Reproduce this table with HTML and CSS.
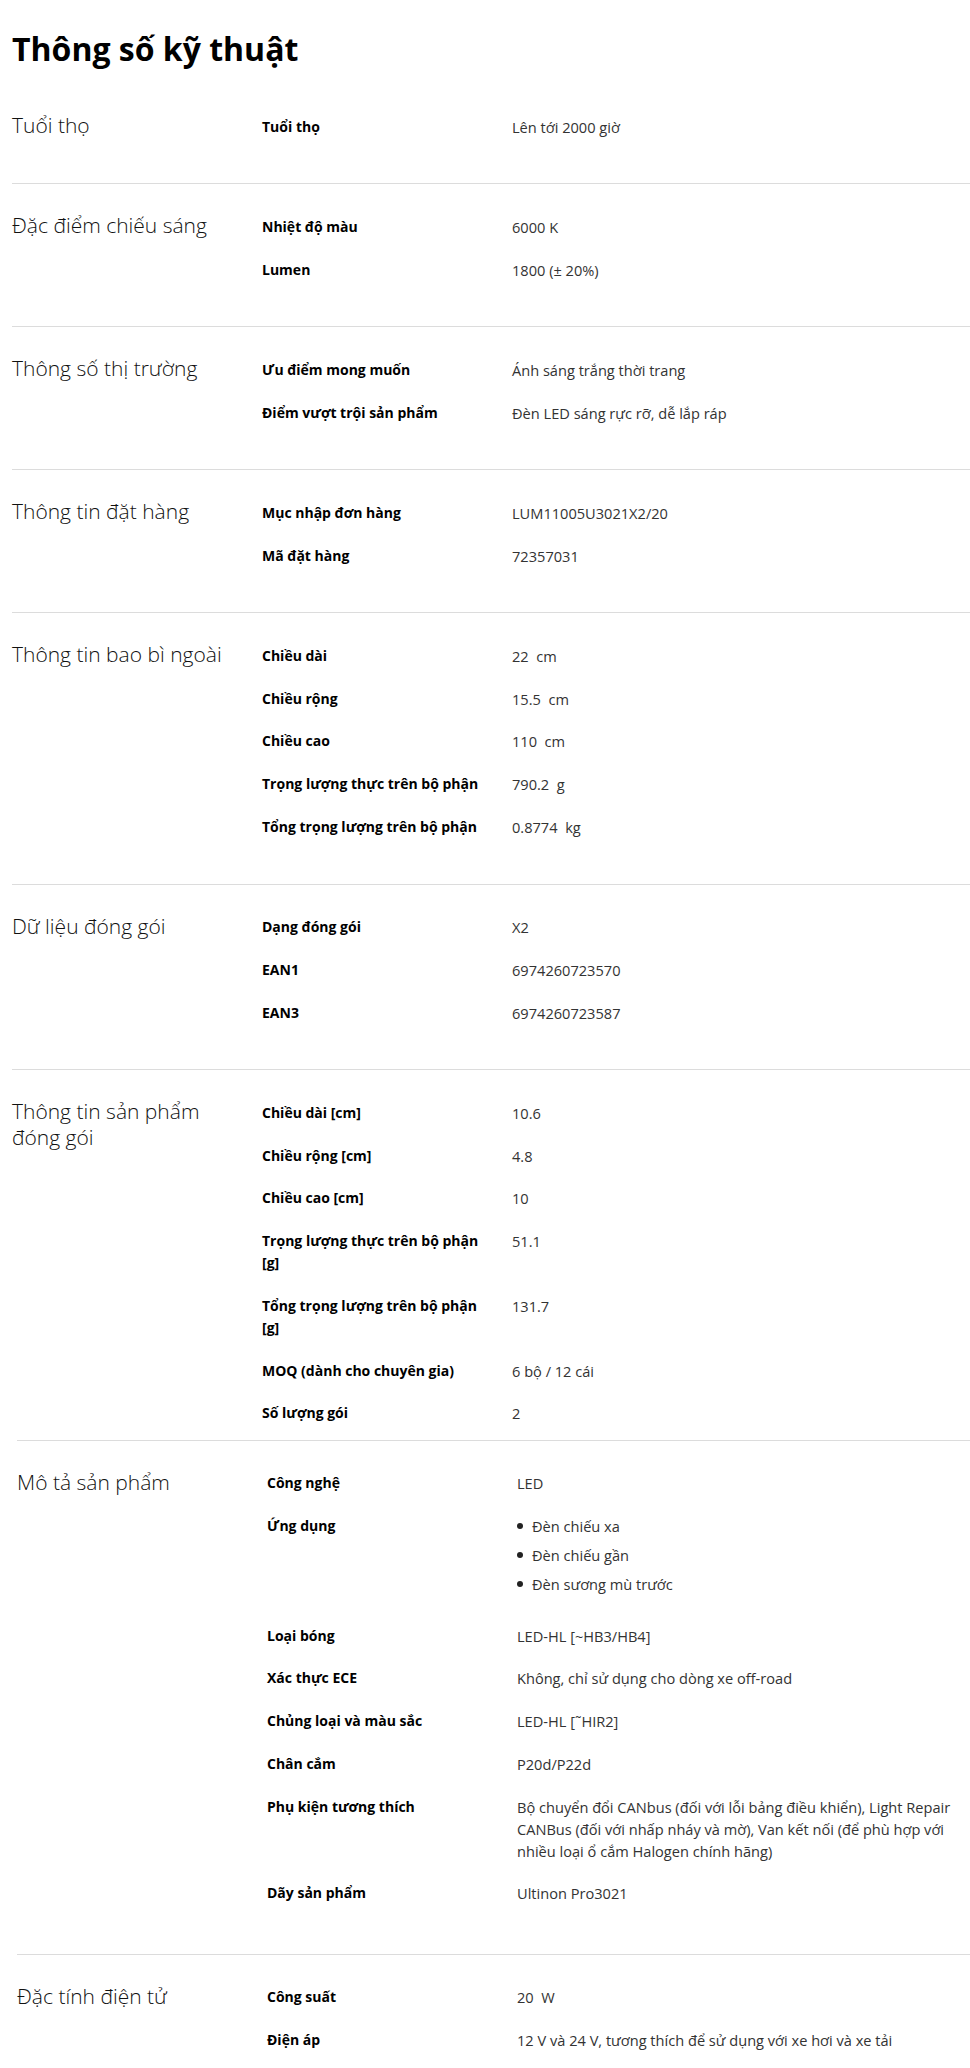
FILE: index.html
```html
<!DOCTYPE html>
<html lang="vi">
<head>
<meta charset="utf-8">
<title>Thông số kỹ thuật</title>
<link rel="stylesheet" href="styles.css">
</head>
<body>
<main class="page">
  <h1 class="title">Thông số kỹ thuật</h1>

  <div class="specs specs-a">
    <section class="spec-section">
      <h3 class="spec-heading">Tuổi thọ</h3>
      <dl class="spec-list">
        <div class="spec-row"><dt>Tuổi thọ</dt><dd>Lên tới 2000 giờ</dd></div>
      </dl>
    </section>

    <section class="spec-section">
      <h3 class="spec-heading">Đặc điểm chiếu sáng</h3>
      <dl class="spec-list">
        <div class="spec-row"><dt>Nhiệt độ màu</dt><dd>6000 K</dd></div>
        <div class="spec-row"><dt>Lumen</dt><dd>1800 (± 20%)</dd></div>
      </dl>
    </section>

    <section class="spec-section">
      <h3 class="spec-heading">Thông số thị trường</h3>
      <dl class="spec-list">
        <div class="spec-row"><dt>Ưu điểm mong muốn</dt><dd>Ánh sáng trắng thời trang</dd></div>
        <div class="spec-row"><dt>Điểm vượt trội sản phẩm</dt><dd>Đèn LED sáng rực rỡ, dễ lắp ráp</dd></div>
      </dl>
    </section>

    <section class="spec-section">
      <h3 class="spec-heading">Thông tin đặt hàng</h3>
      <dl class="spec-list">
        <div class="spec-row"><dt>Mục nhập đơn hàng</dt><dd>LUM11005U3021X2/20</dd></div>
        <div class="spec-row"><dt>Mã đặt hàng</dt><dd>72357031</dd></div>
      </dl>
    </section>

    <section class="spec-section">
      <h3 class="spec-heading">Thông tin bao bì ngoài</h3>
      <dl class="spec-list">
        <div class="spec-row"><dt>Chiều dài</dt><dd>22&nbsp; cm</dd></div>
        <div class="spec-row"><dt>Chiều rộng</dt><dd>15.5&nbsp; cm</dd></div>
        <div class="spec-row"><dt>Chiều cao</dt><dd>110&nbsp; cm</dd></div>
        <div class="spec-row"><dt>Trọng lượng thực trên bộ phận</dt><dd>790.2&nbsp; g</dd></div>
        <div class="spec-row"><dt>Tổng trọng lượng trên bộ phận</dt><dd>0.8774&nbsp; kg</dd></div>
      </dl>
    </section>

    <section class="spec-section">
      <h3 class="spec-heading">Dữ liệu đóng gói</h3>
      <dl class="spec-list">
        <div class="spec-row"><dt>Dạng đóng gói</dt><dd>X2</dd></div>
        <div class="spec-row"><dt>EAN1</dt><dd>6974260723570</dd></div>
        <div class="spec-row"><dt>EAN3</dt><dd>6974260723587</dd></div>
      </dl>
    </section>

    <section class="spec-section spec-section-last">
      <h3 class="spec-heading">Thông tin sản phẩm đóng gói</h3>
      <dl class="spec-list">
        <div class="spec-row"><dt>Chiều dài [cm]</dt><dd>10.6</dd></div>
        <div class="spec-row"><dt>Chiều rộng [cm]</dt><dd>4.8</dd></div>
        <div class="spec-row"><dt>Chiều cao [cm]</dt><dd>10</dd></div>
        <div class="spec-row"><dt>Trọng lượng thực trên bộ phận [g]</dt><dd>51.1</dd></div>
        <div class="spec-row"><dt>Tổng trọng lượng trên bộ phận [g]</dt><dd>131.7</dd></div>
        <div class="spec-row"><dt>MOQ (dành cho chuyên gia)</dt><dd>6 bộ / 12 cái</dd></div>
        <div class="spec-row"><dt>Số lượng gói</dt><dd>2</dd></div>
      </dl>
    </section>
  </div>

  <div class="specs specs-b">
    <section class="spec-section">
      <h3 class="spec-heading">Mô tả sản phẩm</h3>
      <dl class="spec-list">
        <div class="spec-row"><dt>Công nghệ</dt><dd>LED</dd></div>
        <div class="spec-row"><dt>Ứng dụng</dt>
          <dd>
            <ul class="bullets">
              <li>Đèn chiếu xa</li>
              <li>Đèn chiếu gần</li>
              <li>Đèn sương mù trước</li>
            </ul>
          </dd>
        </div>
        <div class="spec-row"><dt>Loại bóng</dt><dd>LED-HL [~HB3/HB4]</dd></div>
        <div class="spec-row"><dt>Xác thực ECE</dt><dd>Không, chỉ sử dụng cho dòng xe off-road</dd></div>
        <div class="spec-row"><dt>Chủng loại và màu sắc</dt><dd>LED-HL [˜HIR2]</dd></div>
        <div class="spec-row"><dt>Chân cắm</dt><dd>P20d/P22d</dd></div>
        <div class="spec-row"><dt>Phụ kiện tương thích</dt><dd>Bộ chuyển đổi CANbus (đối với lỗi bảng điều khiển), Light Repair CANBus (đối với nhấp nháy và mờ), Van kết nối (để phù hợp với nhiều loại ổ cắm Halogen chính hãng)</dd></div>
        <div class="spec-row"><dt>Dãy sản phẩm</dt><dd>Ultinon Pro3021</dd></div>
      </dl>
    </section>

    <section class="spec-section">
      <h3 class="spec-heading">Đặc tính điện tử</h3>
      <dl class="spec-list">
        <div class="spec-row"><dt>Công suất</dt><dd>20&nbsp; W</dd></div>
        <div class="spec-row"><dt>Điện áp</dt><dd>12 V và 24 V, tương thích để sử dụng với xe hơi và xe tải</dd></div>
      </dl>
    </section>
  </div>
</main>
</body>
</html>
```

FILE: styles.css
```css
* {
  box-sizing: border-box;
}

html, body {
  margin: 0;
  padding: 0;
  background: #ffffff;
}

body {
  font-family: "Open Sans", "Noto Sans", "Liberation Sans", sans-serif;
  color: #000;
}

.page {
  padding: 29px 0 0 0;
}

.title {
  margin: 0 0 15px 12px;
  font-size: 32px;
  line-height: 40px;
  font-weight: 700;
  color: #000;
}

.specs-a {
  margin-left: 12px;
}

.specs-b {
  margin-left: 17px;
}

.spec-section {
  display: grid;
  grid-template-columns: 250px 1fr;
  align-items: start;
  padding: 21px 0 35.5px;
}

.specs-a .spec-section {
  border-bottom: 1px solid #dcdcdc;
}

.specs-a .spec-section-last {
  border-bottom: none;
  padding-bottom: 5px;
}

.specs-b .spec-section {
  border-top: 1px solid #dcdcdc;
  padding-bottom: 39px;
}

.spec-heading {
  margin: 0;
  padding: 7px 30px 0 0;
  font-size: 21px;
  line-height: 26px;
  font-weight: 300;
  color: #111;
}

.spec-list {
  margin: 0;
}

.spec-row {
  display: grid;
  grid-template-columns: 250px 1fr;
  padding: 10.5px 0 10.25px;
}

.spec-row dt {
  margin: 0;
  padding-right: 20px;
  font-size: 14px;
  line-height: 22px;
  font-weight: 700;
  color: #000;
}

.spec-row dd {
  margin: 0;
  font-size: 14.6px;
  line-height: 22px;
  font-weight: 400;
  color: #333;
}

.bullets {
  list-style: none;
  margin: 0;
  padding: 0 0 2px;
}

.bullets li {
  display: flex;
  align-items: center;
  margin-bottom: 7px;
}

.bullets li::before {
  content: "";
  width: 6px;
  height: 6px;
  border-radius: 50%;
  background: #222;
  margin-right: 9px;
  flex: none;
}
```
